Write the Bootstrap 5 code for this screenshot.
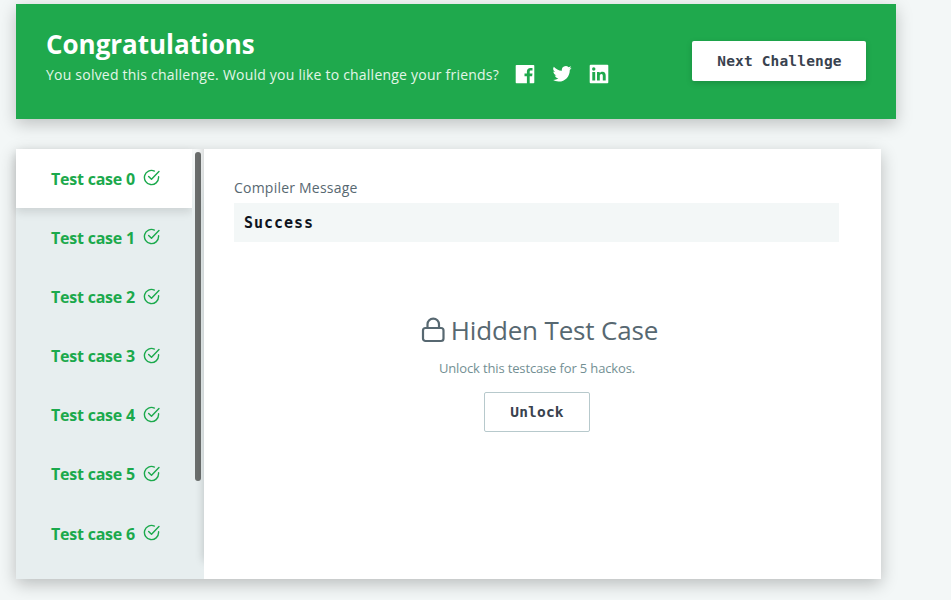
<!DOCTYPE html>
<html lang="en">
<head>
<meta charset="utf-8">
<meta name="viewport" content="width=device-width, initial-scale=1">
<title>Congratulations</title>
<link href="https://cdn.jsdelivr.net/npm/bootstrap@5.3.0/dist/css/bootstrap.min.css" rel="stylesheet">
<style>
body{background:#f3f7f7;font-family:"Open Sans",sans-serif;height:600px;overflow:hidden}
.page{padding:4px 0 0 16px}
.banner{width:880px;height:115px;background:#1fa94d;color:#fff;padding:25px 30px 0;box-shadow:0 5px 16px rgba(0,0,0,.22)}
.banner h1{font-size:26px;line-height:30px;font-weight:700;white-space:nowrap;letter-spacing:-.04px}
.banner p{font-size:14px;line-height:20px;color:#e3f6e8;letter-spacing:.22px;white-space:nowrap}
.share-row{margin-top:6px}
.social{gap:17px;margin:-2px 0 0 16px}
.mono-btn{font-family:"DejaVu Sans Mono",monospace;font-weight:700;font-size:14.5px;color:#39424e;height:40px;border-radius:2px;padding:2px 0 0 1px;letter-spacing:.15px;background:#fff}
.next-btn{width:174px;margin-top:12px;box-shadow:0 2px 6px rgba(0,0,0,.16);border:0}
.unlock-btn{width:106px;border:1px solid #b7c9cc}
.results{width:865px;height:430px;margin-top:30px;background:#e7eeef;box-shadow:0 5px 16px rgba(0,0,0,.24)}
.cases{width:176px}
.case-item{height:59.2px;padding-left:35px;color:#1ba94c;text-decoration:none;white-space:nowrap;line-height:22px}
.case-item span{width:84px;font-weight:700;font-size:16px;letter-spacing:-.22px}
.case-item svg{margin:-1.500px 0 0 7.500px}
.case-item.current{background:#fff;box-shadow:0 4px 9px rgba(0,0,0,.12);height:59px}
.track-wrap{width:12px;height:430px;padding:3px 0 0 3px;background:linear-gradient(#f7f9f9 0,#e7eeef 60px)}
.thumb{width:6px;height:329px;border-radius:3px;background:#6b6e6d}
.detail{background:#fff;padding:29px 42px 0 30px;box-shadow:-4px -14px 9px -4px rgba(0,0,0,.2);clip-path:inset(0 0 0 -12px)}
.label-text{font-size:14px;line-height:20px;color:#576871;letter-spacing:.22px}
.output{height:39px;margin-top:5px;background:#f3f7f7;color:#0e141e;padding-left:10px;font:700 15px/41px "DejaVu Sans Mono",monospace;letter-spacing:.98px}
.locked{margin-top:69px}
.locked h2{font-size:26px;line-height:38px;font-weight:400;color:#576871;white-space:nowrap;letter-spacing:-.15px;padding-left:5px}
.locked h2 svg{margin-right:5px}
.locked p{font-size:13px;line-height:20px;color:#738f93;letter-spacing:-.14px;margin:9px 0 14px;padding-left:1px}
</style>
<script src="https://cdn.jsdelivr.net/npm/bootstrap@5.3.0/dist/js/bootstrap.bundle.min.js"></script>
</head>
<body>
<svg class="d-none" aria-hidden="true">
<symbol id="check" viewBox="0 0 24 24"><path d="M22 11v1a10 10 0 1 1-5.9-9.1M22.500 3.500 12 14.500l-4-4" fill="none" stroke="currentColor" stroke-width="2" stroke-linecap="round" stroke-linejoin="round"/></symbol>
</svg>
<main class="page">
<section class="banner d-flex justify-content-between align-items-start">
<div>
<h1 class="mb-0">Congratulations</h1>
<div class="share-row d-flex align-items-center">
<p class="mb-0">You solved this challenge. Would you like to challenge your friends?</p>
<div class="social d-flex align-items-center">
<svg width="20" height="20" viewBox="0 0 20 20" fill="#fff"><path d="M1.500 1h17a.8.8 0 0 1 .8.8v16.700a.8.8 0 0 1-.8.8h-3.800v-7h2.400l.4-2.800h-2.800V7.800c0-.8.3-1.300 1.400-1.300h1.400V4c-.3 0-1.100-.1-2.100-.1-2.100 0-3.500 1.300-3.500 3.600v2H9.500v2.800h2.400v7H1.500a.8.8 0 0 1-.8-.8V1.800a.8.8 0 0 1 .8-.8z"/></svg>
<svg width="20" height="20" viewBox="0 0 24 24" fill="#fff"><path d="M23.500 4.600c-.9.4-1.800.6-2.700.8 1-.6 1.700-1.500 2.100-2.600-.9.500-1.900.9-3 1.100a4.700 4.700 0 0 0-8 4.300C8 8 4.500 6.100 2.200 3.300a4.700 4.700 0 0 0 1.500 6.300c-.8 0-1.500-.2-2.100-.6v.1c0 2.300 1.600 4.200 3.800 4.600-.7.2-1.400.2-2.100.1.600 1.900 2.300 3.200 4.400 3.300A9.500 9.500 0 0 1 .7 19a13.300 13.300 0 0 0 7.200 2.100c8.700 0 13.700-7.300 13.400-14 .9-.7 1.600-1.500 2.200-2.500z"/></svg>
<svg width="20" height="20" viewBox="0 0 20 20"><rect x=".7" y=".8" width="18.600" height="18.500" rx="1" fill="#fff"/><path d="M3.300 8h2.900v8.500H3.300zM8 8h2.700v1.200c.5-.8 1.400-1.400 2.700-1.400 2.600 0 3.300 1.700 3.300 4v4.700h-2.900v-4.200c0-1.200-.1-2.200-1.400-2.200s-1.600 1-1.600 2.100v4.300H8z" fill="#1fa94d"/><circle cx="4.750" cy="5" r="1.700" fill="#1fa94d"/></svg>
</div>
</div>
</div>
<button class="btn mono-btn next-btn">Next Challenge</button>
</section>
<section class="results d-flex">
<nav class="cases d-flex flex-column">
<a class="case-item current d-flex align-items-center" href="#"><span>Test case 0</span><svg width="17" height="17"><use href="#check"/></svg></a>
<a class="case-item d-flex align-items-center" href="#"><span>Test case 1</span><svg width="17" height="17"><use href="#check"/></svg></a>
<a class="case-item d-flex align-items-center" href="#"><span>Test case 2</span><svg width="17" height="17"><use href="#check"/></svg></a>
<a class="case-item d-flex align-items-center" href="#"><span>Test case 3</span><svg width="17" height="17"><use href="#check"/></svg></a>
<a class="case-item d-flex align-items-center" href="#"><span>Test case 4</span><svg width="17" height="17"><use href="#check"/></svg></a>
<a class="case-item d-flex align-items-center" href="#"><span>Test case 5</span><svg width="17" height="17"><use href="#check"/></svg></a>
<a class="case-item d-flex align-items-center" href="#"><span>Test case 6</span><svg width="17" height="17"><use href="#check"/></svg></a>
</nav>
<div class="track-wrap"><div class="thumb"></div></div>
<div class="detail flex-grow-1">
<div class="label-text">Compiler Message</div>
<div class="output">Success</div>
<div class="locked text-center">
<h2 class="mb-0 d-flex align-items-center justify-content-center"><svg width="26" height="28" viewBox="0 0 26 28" fill="none" stroke="currentColor" stroke-width="2.200"><rect x="3" y="12" width="20.500" height="13" rx="2.500"/><path d="M7.500 12V8.300a5.750 5.750 0 0 1 11.500 0V12"/></svg>Hidden Test Case</h2>
<p>Unlock this testcase for 5 hackos.</p>
<button class="btn mono-btn unlock-btn">Unlock</button>
</div>
</div>
</section>
</main>
</body>
</html>
